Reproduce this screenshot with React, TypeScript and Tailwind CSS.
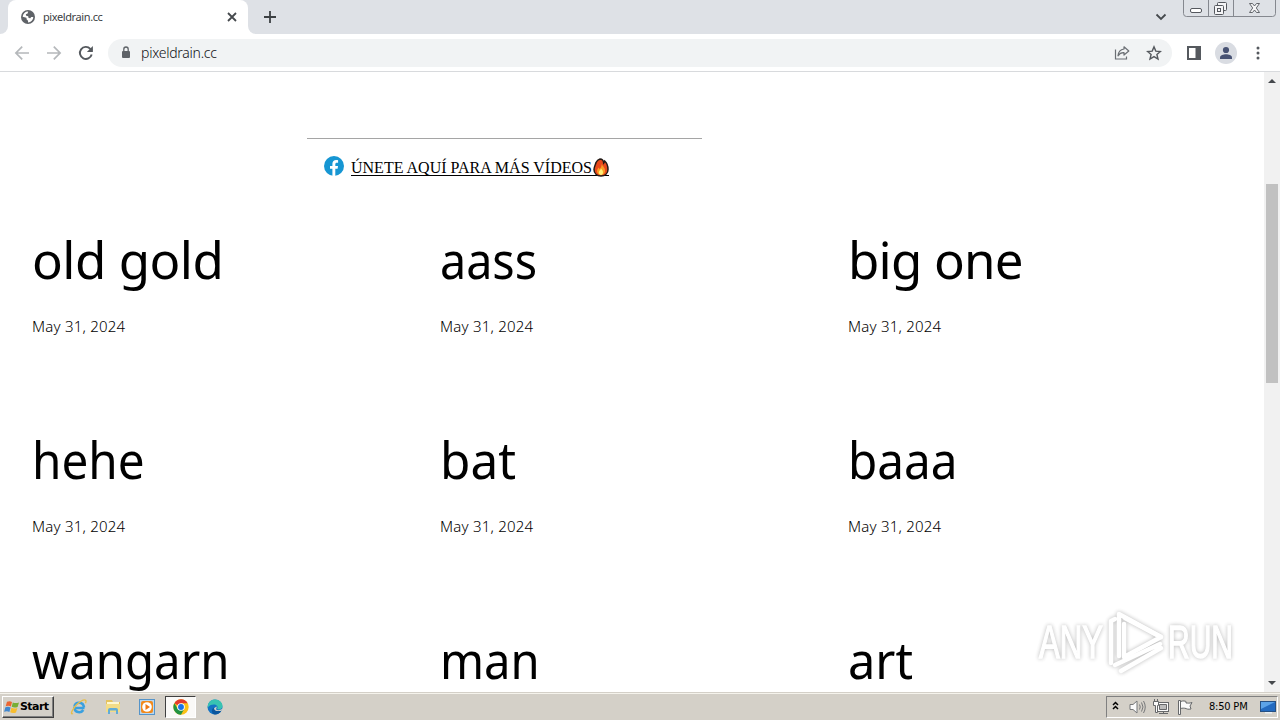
import type { ReactNode } from "react";

const posts = [
  { title: "old gold", fit: "tracking-[-0.5px]" },
  { title: "aass", fit: "scale-x-[0.915]" },
  { title: "big one", fit: "tracking-[-0.8px]" },
  { title: "hehe", fit: "scale-x-[0.935]" },
  { title: "bat", fit: "scale-x-[0.97]" },
  { title: "baaa", fit: "scale-x-[0.935]" },
  { title: "wangarn", fit: "scale-x-[0.928]" },
  { title: "man", fit: "scale-x-[0.925]" },
  { title: "art", fit: "scale-x-[0.955]" },
];

const ChromeLogo = () => (
  <svg width="16" height="16" viewBox="0 0 48 48">
    <circle cx="24" cy="24" r="23" fill="#fbc116" />
    <path d="M24 24 4.1 12.5A23 23 0 0 1 43.9 12.5L24 13Z" fill="#e33b2e" />
    <path d="M4.1 12.5A23 23 0 0 0 24 47L34 29.5 24 24 14 29.5Z" fill="#229342" />
    <circle cx="24" cy="24" r="11.5" fill="#fff" />
    <circle cx="24" cy="24" r="8.8" fill="#1a73e8" />
  </svg>
);

const TabStrip = () => (
  <div className="flex h-[34px] bg-[#dee1e6]">
    <div className="flex h-full w-2 bg-white">
      <div className="h-full w-full rounded-br-lg bg-[#dee1e6]" />
    </div>
    <div className="flex h-full w-[240px] items-center rounded-t-lg bg-white pl-[13px] pr-[10px]">
      <svg width="14" height="14" viewBox="0 0 14 14">
        <circle cx="7" cy="7" r="7" fill="#5f6368" />
        <path d="M7.2 1.6 6.6 3.4 4.8 4.2 5.2 5.8 7.2 6.2 7.6 7.9 9.3 8.2 10.2 7.1 12.3 7A5.4 5.4 0 0 1 7 12.4L7.1 10.7 5.7 9.6 5.4 7.7 1.7 6.8A5.4 5.4 0 0 1 7.2 1.6Z" fill="#fff" />
      </svg>
      <span className="ml-2 text-[11px] tracking-[-0.4px] text-[#3c4043]">pixeldrain.cc</span>
      <svg className="ml-auto" width="12" height="12" viewBox="0 0 12 12" stroke="#45494d" strokeWidth="1.8">
        <path d="m2 2 8 8M10 2 2 10" />
      </svg>
    </div>
    <div className="flex h-full w-2 bg-white">
      <div className="h-full w-full rounded-bl-lg bg-[#dee1e6]" />
    </div>
    <div className="flex h-full w-7 items-center justify-center">
      <svg width="12" height="12" viewBox="0 0 12 12" stroke="#3c4043" strokeWidth="1.8">
        <path d="M6 0v12M0 6h12" />
      </svg>
    </div>
    <div className="ml-auto flex h-full items-center pr-4">
      <svg width="12" height="8" viewBox="0 0 12 8" fill="none" stroke="#45494d" strokeWidth="1.8">
        <path d="m1.500 1.500 4.500 4.500 4.500-4.500" />
      </svg>
    </div>
    <svg className="mr-[3px]" width="94" height="18" viewBox="0 0 94 18" fill="none" stroke="#85888f">
      <path d="M.5 0v13.500a3 3 0 0 0 3 3h86a3 3 0 0 0 3-3V0M25.500 0v16M50.500 0v16" />
      <g stroke="#55585e">
        <rect x="7.500" y="8.500" width="11" height="4" rx="1.500" fill="#fff" />
        <rect x="34.500" y="2.500" width="9" height="8" rx="1" fill="#f5f5f7" />
        <rect x="31.500" y="5.500" width="9" height="9" rx="1" fill="#f5f5f7" />
        <rect x="34.500" y="8.500" width="3" height="3" />
        <path d="M66.500 3.500h3l2 2.500 2-2.500h3l-3.200 4.500 3.200 4.500h-3l-2-2.500-2 2.500h-3l3.200-4.500Z" fill="#f5f5f7" strokeWidth=".9" />
      </g>
    </svg>
  </div>
);

const Toolbar = () => (
  <div className="flex h-[38px] items-center border-b border-[#d8dadd] bg-white">
    <svg className="ml-[14px]" width="16" height="16" viewBox="0 0 16 16" fill="none" stroke="#b5b8bb" strokeWidth="1.7">
      <path d="M15 8H2M8.200 1.700 1.900 8l6.300 6.300" />
    </svg>
    <svg className="ml-4" width="16" height="16" viewBox="0 0 16 16" fill="none" stroke="#b5b8bb" strokeWidth="1.7">
      <path d="M1 8h13M7.800 1.700 14.100 8l-6.300 6.300" />
    </svg>
    <svg className="ml-4" width="16" height="16" viewBox="0 0 16 16" fill="none" stroke="#55595e" strokeWidth="1.900">
      <path d="M13.700 9.500A6 6 0 1 1 12.300 3.800L14 5.500" />
      <path d="M14.900 1v6h-6Z" fill="#55595e" stroke="none" />
    </svg>
    <div className="ml-[14px] flex h-[28px] w-[1064px] items-center rounded-full bg-[#f1f3f4] pl-[13px] pr-[10px]">
      <svg width="10" height="13" viewBox="0 0 10 13">
        <rect x="1" y="5" width="8" height="7" rx="1" fill="#5f6368" />
        <path d="M2.800 5V3.200a2.200 2.200 0 0 1 4.400 0V5" fill="none" stroke="#5f6368" strokeWidth="1.300" />
      </svg>
      <span className="ml-[10px] text-[14px] font-light tracking-[-0.250px] text-[#101114]">pixeldrain.cc</span>
      <svg className="ml-auto" width="16" height="16" viewBox="0 0 16 16" fill="none" stroke="#6b6f74" strokeWidth="1.200">
        <path d="M1.500 4.500v9.500h11v-2.500" />
        <path d="M10 1.800 14.800 6 10 10V7.700C7.500 7.500 5.500 8.500 4 10.800 4.300 7 6.500 4.500 10 4Z" strokeLinejoin="round" />
      </svg>
      <svg className="ml-4" width="16" height="16" viewBox="0 0 16 16" fill="none" stroke="#55595e" strokeWidth="1.400">
        <path d="m8 1.900 1.800 4.200 4.600.4-3.500 3 1.100 4.500L8 11.600 4 14l1.100-4.500-3.500-3 4.600-.4Z" />
      </svg>
    </div>
    <svg className="ml-[15px]" width="14" height="14" viewBox="0 0 14 14">
      <path d="M0 0h14v14H0ZM2 2v10h6.500V2Z" fill="#55595e" fillRule="evenodd" />
    </svg>
    <svg className="ml-[14px]" width="22" height="22" viewBox="0 0 22 22">
      <circle cx="11" cy="11" r="11" fill="#d9dce2" />
      <circle cx="11" cy="8" r="3.100" fill="#475273" />
      <path d="M5 17v-1.500c0-2 3.500-3.200 6-3.200s6 1.200 6 3.200V17Z" fill="#475273" />
    </svg>
    <svg className="ml-[19px]" width="4" height="14" viewBox="0 0 4 14" fill="#55595e">
      <circle cx="2" cy="2" r="1.500" />
      <circle cx="2" cy="7" r="1.500" />
      <circle cx="2" cy="12" r="1.500" />
    </svg>
  </div>
);

const Watermark = () => (
  <svg
    className="absolute left-[1034px] top-[602px] drop-shadow-[0_0_2px_rgba(0,0,0,0.35)]"
    width="204"
    height="76"
    viewBox="0 0 204 76"
    fill="#fff"
    opacity=".8"
  >
    <g
      fontFamily="Liberation Sans Narrow, Liberation Sans, sans-serif"
      fontSize="47"
      stroke="#fff"
      strokeWidth="1.4"
    >
      <text x="5" y="56" textLength="64" lengthAdjust="spacingAndGlyphs">ANY</text>
      <text x="134" y="56" textLength="65" lengthAdjust="spacingAndGlyphs">RUN</text>
    </g>
    <g fill="none" stroke="#fff" strokeWidth="4.500" strokeLinejoin="round" strokeLinecap="round">
      <path d="M77 61V19l4-2" />
      <path d="M85 54V12L127 35" />
      <path d="M90 22v33l37-20L91 16" />
      <path d="M81 63 126 42M87 69 127 46" />
    </g>
  </svg>
);

const Page = () => (
  <div className="flex h-[620px] bg-white">
    <div className="h-full w-[1264px] overflow-hidden">
      <div className="ml-[307px] mt-[66px] h-px w-[395px] bg-[#a5a5a5]" />
      <div className="ml-[324px] mt-4 flex h-[22px] items-center font-['Liberation_Serif',serif] text-[16px] text-black">
        <svg width="20" height="20" viewBox="0 0 20 20">
          <circle cx="10" cy="10" r="10" fill="#1696d3" />
          <path d="M8.400 20v-7.200H6V10h2.400V7.800c0-2.500 1.500-3.800 3.700-3.800.8 0 1.500.1 2 .2v2.500h-1.200c-1.200 0-1.600.7-1.600 1.500V10H14l-.4 2.800h-2.300V20Z" fill="#fff" />
        </svg>
        <div className="ml-[7px] mt-[3px] flex h-[17px] items-center border-b border-black">
          <span className="mt-[2px] w-[242px] whitespace-nowrap">ÚNETE AQUÍ PARA MÁS VÍDEOS</span>
          <svg width="16" height="19" viewBox="0 0 16 19">
            <path d="M7 1c3 0 3.500 2 3.700 4 .5-.6.700-1.200 1-2C14 5 15 8 15 11.500c0 4-3 6.500-7 6.500s-7-2.500-7-6.500C1 8.500 2.500 7 3 4.500 4 2.500 5.200 1.500 7 1Z" fill="#e8491b" stroke="#231a16" strokeWidth="1.500" />
            <path d="M8.500 6c1.500 2.500 4 4 3.500 7.500-.3 2-2 3.500-4 3.500s-4-1.500-4-3.800c0-1.700 1-2.500 1.500-3.700l1 1.500C8 10 8.800 8 8.500 6Z" fill="#fb9c24" />
            <path d="M8 10.500c1 1.500 2 2 2 4 0 1.500-1 2.500-2 2.500s-2.200-1-2.200-2.400c0-1.600 1.600-2.300 2.200-4.100Z" fill="#fff078" />
          </svg>
        </div>
      </div>
      <div className="mt-[50px] grid grid-cols-[408px_408px_408px] pl-8">
        {posts.map((post) => (
          <div key={post.title} className="h-[200px] text-black">
            <h2 className={`h-[72px] w-fit origin-left whitespace-nowrap text-[51px] leading-[64px] ${post.fit}`}>
              {post.title}
            </h2>
            <time className="mt-[15px] block text-[15px] font-light leading-6 tracking-[0.22px]">May 31, 2024</time>
          </div>
        ))}
      </div>
    </div>
    <div className="flex h-full w-4 flex-col items-center bg-[#f1f1f1]">
      <svg className="mt-[7px]" width="8" height="4" viewBox="0 0 8 4" fill="#45484c">
        <path d="m0 4 4-4 4 4Z" />
      </svg>
      <div className="mt-[101px] h-[199px] w-3 bg-[#c1c1c1]" />
      <svg className="mb-[7px] mt-auto" width="8" height="4" viewBox="0 0 8 4" fill="#45484c">
        <path d="m0 0 4 4 4-4Z" />
      </svg>
    </div>
  </div>
);

const Slot = ({ children }: { children: ReactNode }) => (
  <div className="flex h-[22px] w-[34px] items-center justify-center">{children}</div>
);

const Taskbar = () => (
  <div className="flex h-7 items-center border-t border-[#d4d0c8] bg-[#d4d0c8] pl-[2px] pr-[2px] text-black shadow-[inset_0_1px_0_#f5f3ec]">
    <button className="mt-px flex h-[22px] w-[52px] items-center border border-b-[#404040] border-l-white border-r-[#404040] border-t-white bg-[#d4d0c8] pl-px shadow-[inset_-1px_-1px_0_#808080]">
      <svg className="shrink-0" width="16" height="15" viewBox="0 0 16 15">
        <path d="M3 1.800C5 .8 6.500 1 8 2L6.900 6.500C5.300 5.600 3.500 5.500 1.700 6.300Z" fill="#ec6530" />
        <path d="M8.800 2.400c2 1 4 .9 6.200 0l-1.400 4.500c-2 .8-4 .8-5.900-.1Z" fill="#77ae35" />
        <path d="M1.400 7.200c1.800-.8 3.600-.7 5.200.2l-1.200 4.500c-1.700-1-3.400-1-5.300-.1Z" fill="#4187ce" />
        <path d="M7.400 7.800c2 .9 3.900 1 6 .1L12 12.400c-2 .8-4 .8-5.800-.1Z" fill="#f8bd2d" />
      </svg>
      <span className="font-['DejaVu_Sans',sans-serif] text-[11px] font-bold tracking-[-0.550px]">Start</span>
    </button>
    <div className="ml-2 flex">
      <Slot>
        <svg width="18" height="18" viewBox="0 0 18 18" fill="none">
          <path d="M14.500 10H4.500c.2 4.700 6.500 5.500 8.800 2M4.500 8.500c.7-5 8.800-5.500 9.500 1" stroke="#3aa0df" strokeWidth="2.600" />
          <path d="M3 15.500C-1 18 3.500 7.500 11 3.200c4-2.300 6-1.300 4.500 2" stroke="#e7bd4a" strokeWidth="1.300" />
        </svg>
      </Slot>
      <Slot>
        <svg width="16" height="16" viewBox="0 0 16 16">
          <path d="M1 1h6l1 2h7v10H1Z" fill="#e5c35f" />
          <path d="M2 3h12v4H2Z" fill="#fff7cf" />
          <path d="M1 5h14v8H1Z" fill="#f3dc87" />
          <path d="M3 15v-4q0-2 2-2h6q2 0 2 2v4h-2v-3.500H5V15Z" fill="#62acd6" />
        </svg>
      </Slot>
      <Slot>
        <svg width="16" height="16" viewBox="0 0 16 16">
          <rect x=".5" y=".5" width="15" height="15" fill="#b9d7ef" stroke="#5594c9" />
          <rect x="2" y="2" width="12" height="12" rx="2" fill="#f28a1c" />
          <circle cx="8" cy="8" r="4.800" fill="#fff" />
          <path d="m6.500 5 4.500 3-4.500 3Z" fill="#ee7814" />
        </svg>
      </Slot>
      <div className="ml-px mr-[2px] flex h-[22px] w-[31px] items-center justify-center border border-b-white border-l-[#404040] border-r-white border-t-[#404040] bg-[#faf9f7]">
        <ChromeLogo />
      </div>
      <Slot>
        <svg width="16" height="16" viewBox="0 0 16 16">
          <circle cx="8" cy="8" r="7.500" fill="#1473c4" />
          <path d="M1 6C2 2 5 .5 8 .5c4.500 0 7.500 3 7.500 6.500 0 3-3 4-5.500 3 1.500-2 0-4.500-3-4.500C4 5.500 2 6.500.5 9Z" fill="#38c3b2" />
          <path d="M6.800 8.500c0 3 3 4 7.700 3C13 14 10.500 15.500 8 15.500c-3 0-4.500-5-1.200-7Z" fill="#0b569d" />
          <path d="M9.500 7.500c.5 1.500-.5 2-.5 2.700 1.500 1.600 4.500 1 6.500-.7v1.700c-4 1.600-8.300 1-8.500-2Z" fill="#d4d0c8" />
        </svg>
      </Slot>
    </div>
    <div className="ml-auto mt-px flex h-[22px] w-[172px] items-center border border-b-white border-l-[#808080] border-r-white border-t-[#808080] pl-[5px]">
      <svg className="-mt-1" width="7" height="9" viewBox="0 0 7 9" fill="none" stroke="#000" strokeWidth="1.500">
        <path d="m1 4 2.500-2.500L6 4M1 8l2.500-2.500L6 8" />
      </svg>
      <svg className="ml-[10px]" width="17" height="16" viewBox="0 0 17 16" fill="none" stroke="#77787a">
        <path d="M1 5.500h3L8 2v12l-4-3.500H1Z" fill="#fafafa" />
        <path d="M10.500 5.500q1.500 2.500 0 5M12.500 3.500q3 4.500 0 9M14.500 2q3.500 6 0 12" />
      </svg>
      <svg className="ml-[7px]" width="17" height="16" viewBox="0 0 17 16" fill="#fafafa" stroke="#66686a">
        <rect x="4.500" y="3.500" width="11" height="9" />
        <path d="M6.500 5.500h7v5h-7Z" fill="#bcbcbc" />
        <path d="M6 14.500h9M10.500 12v2M.5 2.500h5v4h-1v7h-2v-7h-2ZM1.500 0v2M4.500 0v2" />
      </svg>
      <svg className="ml-[7px]" width="17" height="16" viewBox="0 0 17 16" fill="#fafafa" stroke="#66686a">
        <path d="M1.500 1.500h2v14h-2ZM3.500 2.500c3-1 4.500-.5 5.500 0v1.500c2 0 3 .5 6-.500L13 7l1 3c-3 .5-4 0-5-.500-2-.5-3.500-.5-5.500 0Z" />
      </svg>
      <span className="ml-[15px] whitespace-nowrap font-['DejaVu_Sans_Condensed','DejaVu_Sans',sans-serif] text-[11px] tracking-[-0.200px]">8:50 PM</span>
      <svg className="ml-auto mr-px" width="16" height="14" viewBox="0 0 16 14">
        <rect x=".5" y="1.500" width="15" height="10" fill="#246bc0" stroke="#265083" />
        <path d="M1 2h14L1 9Z" fill="#5ca3e8" />
        <path d="M5 12h7v1.500H5Z" fill="#eaf0f5" />
      </svg>
    </div>
  </div>
);

const App = () => {
  return (
    <div className="relative flex h-[720px] w-[1280px] flex-col overflow-hidden bg-white font-['Noto_Sans',sans-serif]">
      <TabStrip />
      <Toolbar />
      <Page />
      <Taskbar />
      <Watermark />
    </div>
  );
};

export default App;
